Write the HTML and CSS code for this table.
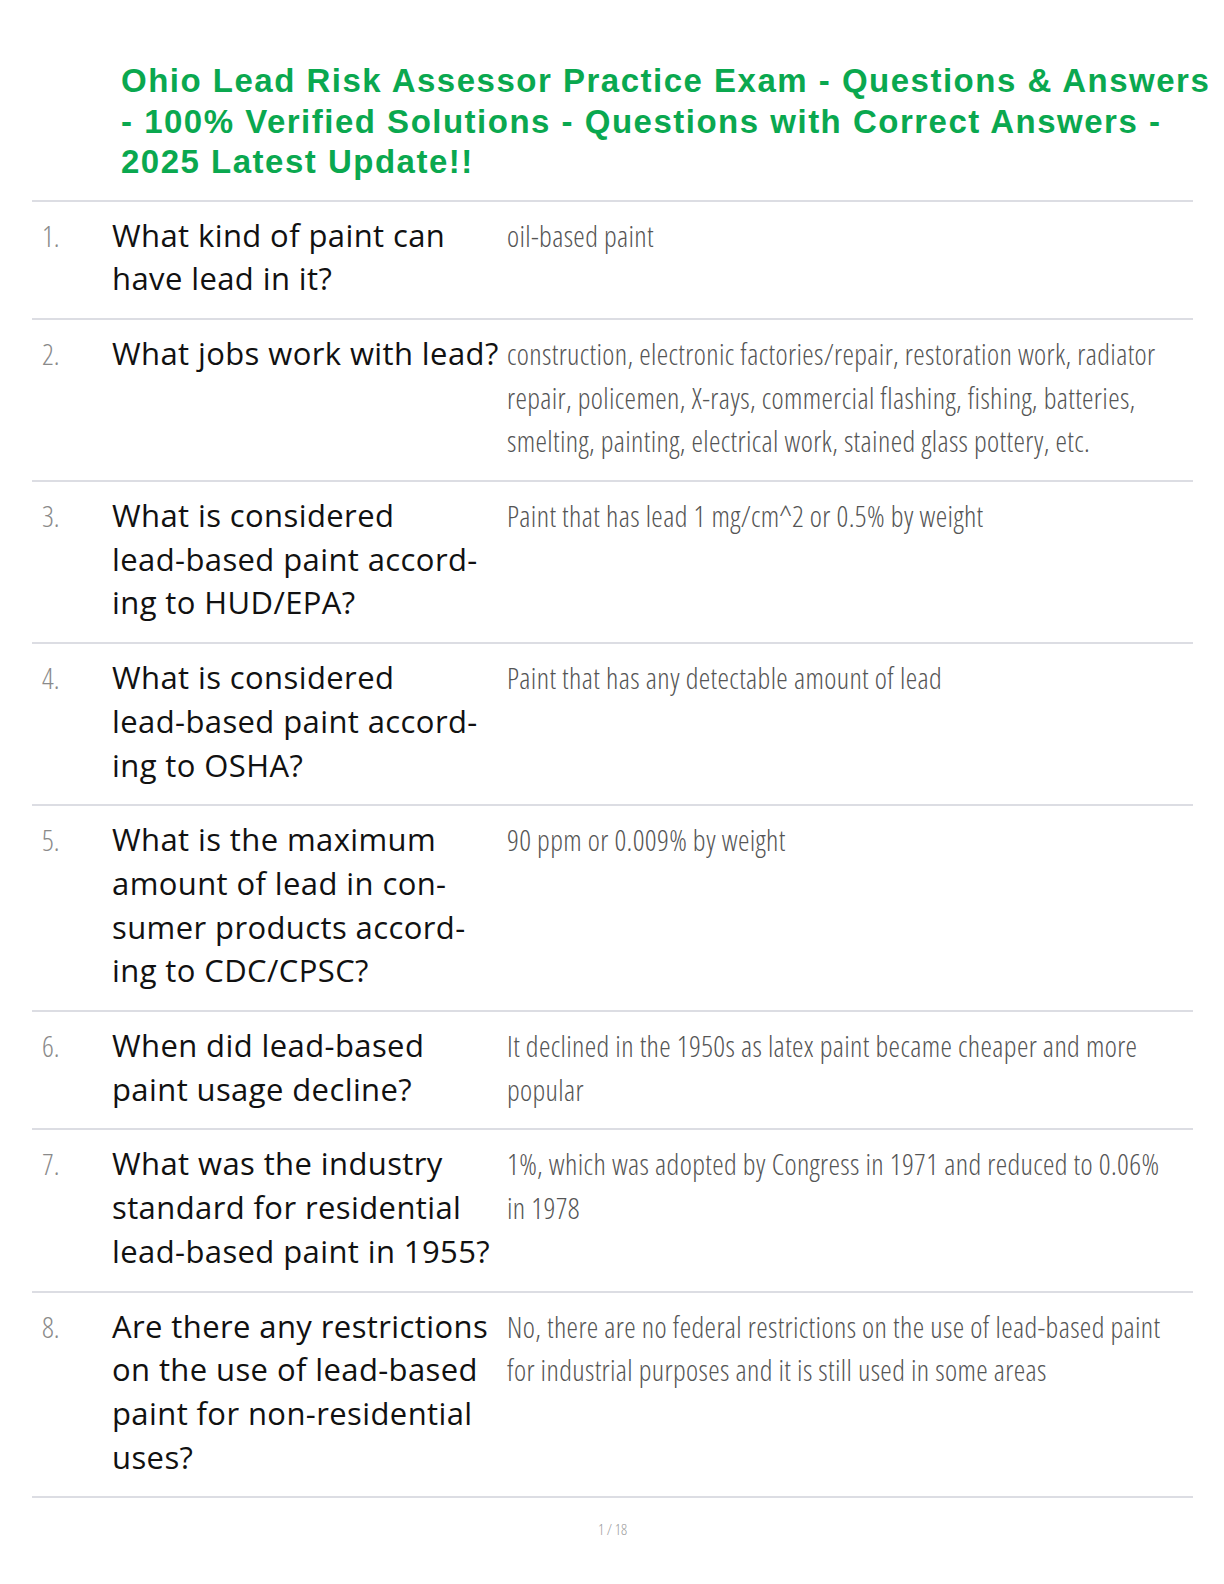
FILE: index.html
```html
<!DOCTYPE html>
<html lang="en">
<head>
<meta charset="utf-8">
<title>Ohio Lead Risk Assessor Practice Exam</title>
<link rel="stylesheet" href="styles.css">
</head>
<body>
<div class="page">
  <h1 class="title">Ohio Lead Risk Assessor Practice Exam - Questions &amp; Answers - 100% Verified Solutions - Questions with Correct Answers - 2025 Latest Update!!</h1>
  <div class="qa-list">
    <div class="row">
      <div class="num">1.</div>
      <div class="q">What kind of paint can have lead in it?</div>
      <div class="a">oil-based paint</div>
    </div>
    <div class="row">
      <div class="num">2.</div>
      <div class="q"><span class="nb">What jobs work with lead?</span></div>
      <div class="a">construction, electronic factories/repair, restoration work, radiator repair, policemen, X-rays, commercial flashing, fishing, batteries, smelting, painting, electrical work, stained glass pottery, etc.</div>
    </div>
    <div class="row">
      <div class="num">3.</div>
      <div class="q">What is considered <span class="nb">lead-based</span> paint accord&shy;ing to HUD/EPA?</div>
      <div class="a">Paint that has lead 1 mg/cm^2 or 0.5% by weight</div>
    </div>
    <div class="row">
      <div class="num">4.</div>
      <div class="q">What is considered <span class="nb">lead-based</span> paint accord&shy;ing to OSHA?</div>
      <div class="a">Paint that has any detectable amount of lead</div>
    </div>
    <div class="row">
      <div class="num">5.</div>
      <div class="q">What is the maximum amount of lead in con&shy;sumer products accord&shy;ing to CDC/CPSC?</div>
      <div class="a">90 ppm or 0.009% by weight</div>
    </div>
    <div class="row">
      <div class="num">6.</div>
      <div class="q">When did <span class="nb">lead-based</span> paint usage decline?</div>
      <div class="a">It declined in the 1950s as latex paint became cheaper and more popular</div>
    </div>
    <div class="row">
      <div class="num">7.</div>
      <div class="q">What was the industry standard for residential <span class="nb">lead-based</span> paint in 1955?</div>
      <div class="a">1%, which was adopted by Congress in 1971 and reduced to 0.06% in 1978</div>
    </div>
    <div class="row">
      <div class="num">8.</div>
      <div class="q">Are there any restrictions on the use of <span class="nb">lead-based</span> paint for <span class="nb">non-residential</span> uses?</div>
      <div class="a">No, there are no federal restrictions on the use of lead-based paint for industrial purposes and it is still used in some areas</div>
    </div>
  </div>
  <div class="pager">1 / 18</div>
</div>
</body>
</html>
```
FILE: styles.css
```css
html, body {
  margin: 0;
  padding: 0;
  background: #ffffff;
}

.page {
  width: 1161px;
  margin-left: 32px;
  padding-top: 61px;
}

.title {
  width: 1100px;
  margin: 0 0 17px 89px;
  font-family: "Liberation Sans", Arial, sans-serif;
  font-weight: 700;
  font-size: 33px;
  line-height: 40.5px;
  color: #0aa84f;
  letter-spacing: 1.5px;
}

.qa-list {
  border-bottom: 2px solid #dcdde3;
}

.row {
  display: grid;
  grid-template-columns: 80px 395px 1fr;
  border-top: 2px solid #dcdde3;
  padding: 12px 0 17px 0;
}

.num {
  padding-left: 10px;
  font-family: "Open Sans", "Liberation Sans", sans-serif;
  font-stretch: 75%;
  font-weight: 300;
  font-size: 29px;
  line-height: 43.7px;
  color: #8a8a8a;
}

.q {
  padding-right: 13px;
  font-family: "Open Sans", "Noto Sans", sans-serif;
  font-weight: 500;
  font-size: 31px;
  line-height: 43.7px;
  letter-spacing: 0.4px;
  color: #111111;
  hyphens: manual;
}

.nb {
  white-space: nowrap;
}

.a {
  padding-right: 15px;
  font-family: "Open Sans", "Liberation Sans", sans-serif;
  font-stretch: 75%;
  font-weight: 300;
  font-size: 29px;
  line-height: 43.7px;
  letter-spacing: 0.35px;
  color: #555555;
}

.pager {
  text-align: center;
  margin-top: 21px;
  font-family: "Open Sans", sans-serif;
  font-stretch: 75%;
  font-weight: 300;
  font-size: 15px;
  color: #999999;
}
```
